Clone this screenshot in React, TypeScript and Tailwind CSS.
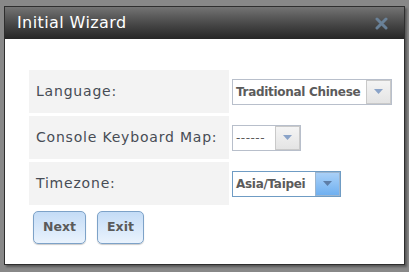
export default function App() {
  const font = { fontFamily: '"DejaVu Sans", Verdana, sans-serif' };
  return (
    <div className="w-[409px] h-[272px] bg-[#888888] pt-[6px] pl-[4px]" style={font}>
      <div className="w-[401px] h-[259px] border border-[#2e2e2e] bg-white shadow-[2px_2px_2px_rgba(0,0,0,0.35)] flex flex-col">
        {/* Title bar */}
        <div className="h-[32px] flex items-center justify-between pl-[12px] pr-[16px] bg-gradient-to-b from-[#747474] via-[#4a4a4a] to-[#262626]">
          <span className="text-white text-[16px] tracking-[0.4px] leading-none">Initial Wizard</span>
          <svg width="13" height="13" viewBox="0 0 13 13" className="opacity-90">
            <path d="M2 2 L11 11 M11 2 L2 11" stroke="#6d87a0" strokeWidth="3" strokeLinecap="round" />
          </svg>
        </div>

        {/* Form */}
        <div className="pl-[24px] pt-[31px]">
          <div className="grid grid-cols-[200px_auto] gap-[3px] items-center">
            <div className="h-[43px] bg-[#f3f3f3] flex items-center pl-[7px] text-[14px] tracking-[0.8px] text-[#474c55]">
              Language:
            </div>
            <Select value="Traditional Chinese" width="w-[160px]" />
            <div className="h-[43px] bg-[#f3f3f3] flex items-center pl-[7px] text-[14px] tracking-[0.8px] text-[#474c55]">
              Console Keyboard Map:
            </div>
            <Select value="------" width="w-[69px]" dashes />
            <div className="h-[43px] bg-[#f3f3f3] flex items-center pl-[7px] text-[14px] tracking-[0.8px] text-[#474c55]">
              Timezone:
            </div>
            <Select value="Asia/Taipei" width="w-[109px]" active />
          </div>

          <div className="flex gap-[11px] mt-[6px] pl-[4px]">
            <button className="w-[53px] h-[33px] rounded-[5px] border border-[#7da2c8] bg-gradient-to-b from-[#c4dcf6] to-[#eaf3fd] text-[12.5px] font-bold text-[#5a5a5a] shadow-[0_1px_1px_rgba(0,0,0,0.2)]">
              Next
            </button>
            <button className="w-[47px] h-[33px] rounded-[5px] border border-[#7da2c8] bg-gradient-to-b from-[#c4dcf6] to-[#eaf3fd] text-[12.5px] font-bold text-[#5a5a5a] shadow-[0_1px_1px_rgba(0,0,0,0.2)]">
              Exit
            </button>
          </div>
        </div>
      </div>
    </div>
  );
}

function Select({
  value,
  width,
  active,
  dashes,
}: {
  value: string;
  width: string;
  active?: boolean;
  dashes?: boolean;
}) {
  return (
    <div className="flex items-center">
      <div
        className={`${width} h-[26px] flex border bg-white ${
          active ? "border-[#6f9cc4]" : "border-[#b8bfcb]"
        }`}
      >
        <div
          className={`flex-1 flex items-center pl-[3px] text-[12px] text-[#5b5b5b] whitespace-nowrap overflow-hidden ${
            dashes ? "tracking-[0.5px]" : "font-bold tracking-[-0.3px]"
          }`}
        >
          {value}
        </div>
        <div
          className={`w-[25px] h-full border ${
            active
              ? "border-[#9bb5cf] bg-gradient-to-b from-[#a9d0f7] to-[#6fb0f0]"
              : "border-[#c9c9c9] bg-gradient-to-b from-[#f4f4f4] to-[#e4e4e4]"
          } flex items-center justify-center`}
        >
          <svg width="9" height="5" viewBox="0 0 9 5">
            <path d="M0 0 L9 0 L4.5 5 Z" fill={active ? "#5d7da6" : "#8aa3c8"} />
          </svg>
        </div>
      </div>
    </div>
  );
}
